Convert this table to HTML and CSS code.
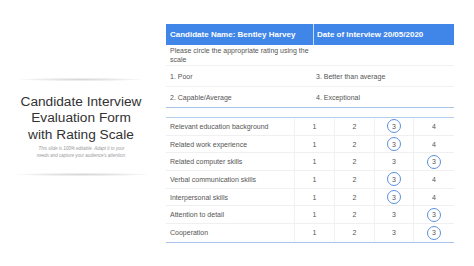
FILE: index.html
```html
<!DOCTYPE html>
<html>
<head>
<meta charset="utf-8">
<link rel="stylesheet" href="styles.css">
</head>
<body>
<div class="page">
  <div class="intro">
    <div class="shadow"></div>
    <h1 class="title">Candidate Interview Evaluation Form with Rating Scale</h1>
    <p class="sub">This slide is 100% editable. Adapt it to your<br>needs and capture your audience's attention.</p>
    <div class="shadow shadow-b"></div>
  </div>
  <div class="form">
    <div class="info">
      <div class="head">Candidate Name: Bentley Harvey</div>
      <div class="head head-r">Date of Interview 20/05/2020</div>
      <div class="cell tall">Please circle the appropriate rating using the scale</div>
      <div class="cell tall"></div>
      <div class="cell">1. Poor</div>
      <div class="cell">3. Better than average</div>
      <div class="cell last">2. Capable/Average</div>
      <div class="cell last">4. Exceptional</div>
    </div>
    <div class="rating">
      <div class="row"><div class="lbl">Relevant education background</div><div class="n">1</div><div class="n">2</div><div class="n"><span class="ring">3</span></div><div class="n">4</div></div>
      <div class="row"><div class="lbl">Related work experience</div><div class="n">1</div><div class="n">2</div><div class="n"><span class="ring">3</span></div><div class="n">4</div></div>
      <div class="row"><div class="lbl">Related computer skills</div><div class="n">1</div><div class="n">2</div><div class="n">3</div><div class="n"><span class="ring">3</span></div></div>
      <div class="row"><div class="lbl">Verbal communication skills</div><div class="n">1</div><div class="n">2</div><div class="n"><span class="ring">3</span></div><div class="n">4</div></div>
      <div class="row"><div class="lbl">Interpersonal skills</div><div class="n">1</div><div class="n">2</div><div class="n"><span class="ring">3</span></div><div class="n">4</div></div>
      <div class="row"><div class="lbl">Attention to detail</div><div class="n">1</div><div class="n">2</div><div class="n">3</div><div class="n"><span class="ring">3</span></div></div>
      <div class="row last"><div class="lbl">Cooperation</div><div class="n">1</div><div class="n">2</div><div class="n">3</div><div class="n"><span class="ring">3</span></div></div>
    </div>
  </div>
</div>
</body>
</html>
```

FILE: styles.css
```css
* { box-sizing: border-box; }
html, body { margin: 0; padding: 0; background: #ffffff; }
body { width: 474px; height: 266px; overflow: hidden; font-family: "Liberation Sans", Arial, sans-serif; }
.page { display: flex; width: 474px; height: 266px; }

.intro { width: 166px; flex: none; display: flex; flex-direction: column; align-items: center; padding-top: 78px; }
.shadow { width: 122px; height: 3px; margin-left: -4px; background: radial-gradient(ellipse at center, rgba(0,0,0,0.16) 0%, rgba(0,0,0,0.06) 55%, rgba(0,0,0,0) 75%); }
.shadow-b { width: 132px; margin-top: 14px; margin-left: -2px; }
.title { margin: 12.5px 0 0 -4px; width: 124px; font-size: 13.7px; line-height: 16.6px; font-weight: normal; color: #333333; text-align: center; }
.sub { margin: 3px 0 0 -3px; font-size: 4.5px; line-height: 6.5px; font-style: italic; color: #9a9a9a; text-align: center; }

.form { width: 288px; flex: none; padding-top: 24px; }
.info { display: grid; grid-template-columns: 147px 141px; grid-template-rows: 21px 21px 21px 20px; border-bottom: 1px solid #a9c5ec; }
.head { background: #3f86e8; color: #ffffff; font-weight: bold; font-size: 8px; padding-left: 4px; display: flex; align-items: center; }
.head-r { border-left: 1px solid #c9dcf7; padding-left: 3px; }
.cell { font-size: 7px; color: #555555; padding-left: 4px; display: flex; align-items: center; border-bottom: 1px solid #f1f1f1; }
.cell:nth-child(even) { padding-left: 3px; }
.cell.tall { line-height: 9px; padding-right: 0; }
.cell.last { border-bottom: none; }

.rating { margin-top: 9px; border-top: 1px solid #b7cfef; border-bottom: 1px solid #a9c5ec; }
.row { display: grid; grid-template-columns: 129px 40px 40px 39px 40px; height: 17.7px; border-bottom: 1px solid #f0f0f0; }
.row.last { border-bottom: none; }
.lbl { font-size: 7px; color: #555555; padding-left: 4px; display: flex; align-items: center; border-right: 1px solid #f0f0f0; }
.n { font-size: 7px; color: #555555; display: flex; align-items: center; justify-content: center; border-right: 1px solid #f0f0f0; }
.n:last-child { border-right: none; }
.ring { width: 14px; height: 14px; border: 1px solid #5b90de; border-radius: 50%; display: flex; align-items: center; justify-content: center; }
```
